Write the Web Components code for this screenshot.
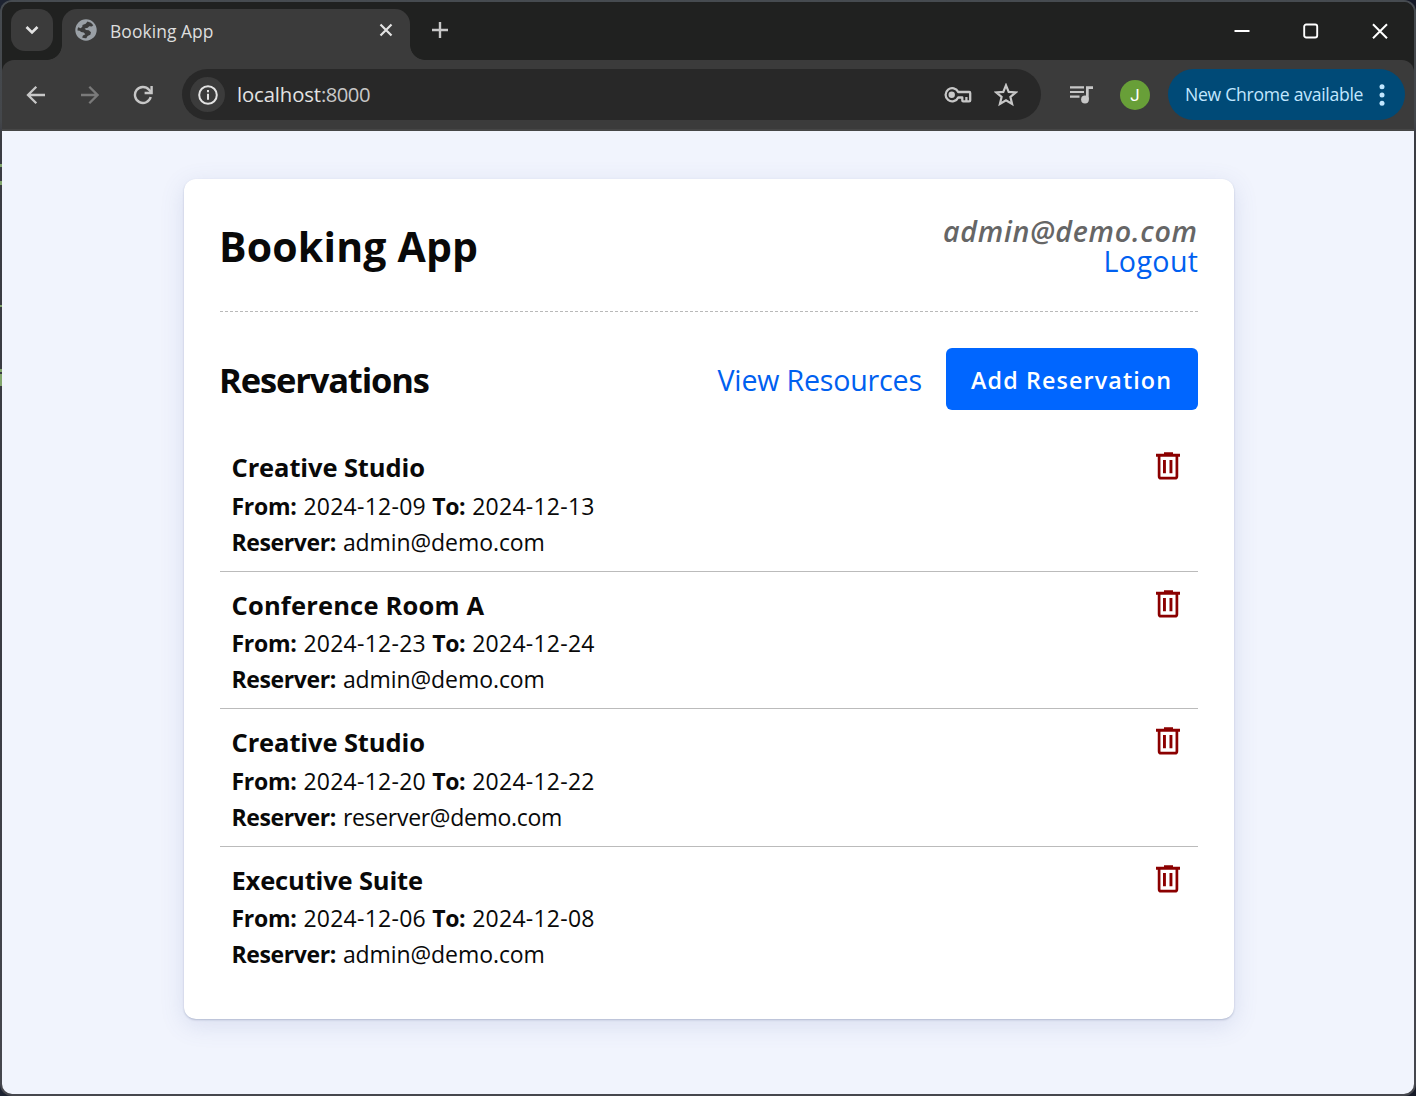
<!DOCTYPE html>
<html lang="en">
<head>
<meta charset="utf-8">
<title>Booking App</title>
<style>
html,body{margin:0;height:100%;overflow:hidden;background:linear-gradient(90deg,#1d2331,#151927)}
body{font-family:"Open Sans","Noto Sans",sans-serif;color:#090909}
</style>
</head>
<body>
<app-window>
  <tab-strip slot="tabs" label="Booking App"></tab-strip>
  <nav-bar slot="nav"></nav-bar>
  <booking-card>
    <account-header slot="header" email="admin@demo.com"></account-header>
    <section-bar slot="bar"></section-bar>
    <reservation-row name="Creative Studio" name-width="193.5" from="2024-12-09" to="2024-12-13" who="admin@demo.com" who-width="202"></reservation-row>
    <reservation-row name="Conference Room A" name-width="252.5" from="2024-12-23" to="2024-12-24" who="admin@demo.com" who-width="202"></reservation-row>
    <reservation-row name="Creative Studio" name-width="193.5" from="2024-12-20" to="2024-12-22" who="reserver@demo.com" who-width="219.5"></reservation-row>
    <reservation-row name="Executive Suite" name-width="191.5" from="2024-12-06" to="2024-12-08" who="admin@demo.com" who-width="202"></reservation-row>
  </booking-card>
</app-window>
<script>
const define = (name, render, after) => customElements.define(name, class extends HTMLElement {
  connectedCallback() {
    if (this.shadowRoot) return;
    this.attachShadow({mode: 'open'}).innerHTML = render(this);
    if (after) after(this);
  }
});
const at = (el, n) => el.getAttribute(n) || '';

/* Tracks a single line of text so that it occupies the given advance width. */
define('fit-text', () => `<style>:host{display:inline-block;white-space:nowrap}span{display:inline-block}</style><span><slot></slot></span>`, el => {
  const s = el.shadowRoot.querySelector('span');
  const want = parseFloat(at(el, 'w'));
  const n = el.textContent.length;
  const gap = (want - s.getBoundingClientRect().width) / (n - 1);
  s.style.letterSpacing = gap + 'px';
  s.style.marginRight = -gap + 'px';
});

define('app-window', () => `<style>
:host{display:flex;flex-direction:column;box-sizing:border-box;height:1096px;width:1416px;padding:2px;border-radius:12px;background:linear-gradient(#464b50,#44474b 120px,#3b3c43 135px,#3a3b43 60%,#46474e);overflow:hidden}
.in{display:flex;flex-direction:column;flex:1;border-radius:10px;overflow:hidden;background:#202120}
main{flex:1;background:#f1f4fd;padding:48px 180px 0 182px;overflow:hidden}
.speck{position:absolute;left:0;width:2px;background:#82a56c}
</style><div class="in"><slot name="tabs"></slot><slot name="nav"></slot><main><slot></slot></main></div>
<i class="speck" style="top:164px;height:3px"></i><i class="speck" style="top:181px;height:4px"></i><i class="speck" style="top:305px;height:2px"></i><i class="speck" style="top:369px;height:3px"></i><i class="speck" style="top:374px;height:12px"></i>`);

define('tab-strip', el => `<style>
:host{display:flex;height:58px;background:#202120;flex:none}
.search{width:42px;height:42px;margin:7px 0 0 9px;border-radius:14px;background:#3b3b3b;display:flex;align-items:center;justify-content:center}
.tab{position:relative;box-sizing:border-box;width:348px;height:51px;margin:7px 0 0 9px;border-radius:15px 15px 0 0;background:#3b3b3b;display:flex;align-items:center;padding:0 17px 9px 13px;font-size:17.4px;color:#dedede}
.tab:before,.tab:after{content:"";position:absolute;bottom:0;width:15px;height:15px}
.tab:before{left:-15px;background:radial-gradient(circle at 0 0,#0000 14.5px,#3b3b3b 15.2px)}
.tab:after{right:-15px;background:radial-gradient(circle at 100% 0,#0000 14.5px,#3b3b3b 15.2px)}
fit-text{margin:1px auto 0 13px;line-height:24px}
.plus{margin:20px auto 0 22px}
.win{display:flex;gap:53px;padding:21px 26px 0 0}
svg{display:block;flex:none}
</style>
<div class="search"><svg width="14" height="10" fill="none" stroke="#e3e3e3" stroke-width="2.700"><path d="m1.500 2 5.500 5.400L12.500 2"/></svg></div>
<div class="tab">
<svg width="22" height="22" viewBox="0 0 22 22"><circle cx="11" cy="11" r="10.700" fill="#9aa0a6"/><path fill="#3b3b3b" d="M12.500 2.600Q16.500 3.100 18.300 6.200L16.800 7.600 14.200 7.200 12.800 8.700 9.600 9.500 11 11 13.800 11.200 16 13.300 15.300 15.800 12.600 17 11.300 19.200Q9.100 19.400 7.100 18.400L8 16.500 10.300 15.200 8.800 13.600 6.100 13 4.700 11.700 2.500 11.400Q2.500 9.600 3.100 8.300L5.700 9.300 7.300 7.700 7.500 6 10.700 4.700Z"/></svg>
<fit-text w="103.500">${at(el,'label')}</fit-text>
<svg width="14" height="14" fill="none" stroke="#e3e3e3" stroke-width="2.200"><path d="m1.500 1.500 11 11m0-11-11 11"/></svg>
</div>
<div class="plus"><svg width="16" height="16" fill="none" stroke="#c7c7c7" stroke-width="2.400"><path d="M8 0v16M0 8h16"/></svg></div>
<div class="win">
<svg width="16" height="16"><path fill="#fff" d="M.5 7h15v2H.5z"/></svg>
<svg width="16" height="16"><rect x="1.200" y="1.500" width="13" height="13" rx="2" fill="none" stroke="#fff" stroke-width="1.900"/></svg>
<svg width="16" height="16" fill="none" stroke="#fff" stroke-width="2"><path d="m1 1.300 14 14m0-14L1 15.300"/></svg>
</div>`);

define('nav-bar', () => `<style>
:host{display:flex;box-sizing:border-box;height:71px;background:#3b3b3b;border-bottom:2px solid #464646;border-radius:12px 12px 0 0;flex:none;align-items:center;padding:0 9px 0 23px}
svg{display:block;flex:none}
.omni{box-sizing:border-box;width:859px;flex:none;height:51px;margin-left:29px;border-radius:26px;background:#282828;display:flex;align-items:center;padding:0 23px 0 8px;font-size:20.300px;line-height:28px;color:#e3e3e3}
.info{width:35px;height:35px;border-radius:50%;background:#3b3b3b;display:flex;align-items:center;justify-content:center;margin-right:12px}
.omni fit-text{margin-top:-2px}
.port{color:#c7c7c7}
.key{margin-left:auto}.star{margin-left:22px}
.ava{width:30px;height:30px;border-radius:50%;background:#689f38;color:#fff;font:17px/31px Roboto,sans-serif;text-align:center;margin-left:27px;flex:none}
.pill{box-sizing:border-box;width:237px;flex:none;height:51px;border-radius:26px;background:#004a77;color:#c2e7ff;margin-left:18px;display:flex;align-items:center;padding:0 19px 0 17px;font-size:17.600px;line-height:24px;justify-content:space-between}
.pill fit-text{margin-top:-2px}
</style>
<svg width="20" height="20" fill="none" stroke="#c7c7c7" stroke-width="2.300"><path d="M20 10H3M11.300 1.800 3 10l8.300 8.200"/></svg>
<svg style="margin-left:34px" width="20" height="20" fill="none" stroke="#7a7a7a" stroke-width="2.300"><path d="M2 10h16M10.300 1.800l8.200 8.200-8.200 8.200"/></svg>
<svg style="margin-left:34px" width="20" height="20" fill="none" stroke="#c7c7c7" stroke-width="2.400"><path d="M17.700 12A8 8 0 1 1 16 4.700l2 2.200"/><path d="M18.600 1v7h-7"/></svg>
<div class="omni"><div class="info"><svg width="20" height="20"><circle cx="10" cy="10" r="8.800" fill="none" stroke="#e3e3e3" stroke-width="2"/><path fill="#e3e3e3" d="M9 8.800h2v6H9zM9 5h2v2.200H9z"/></svg></div><fit-text w="84">localhost</fit-text><fit-text class="port" w="49.500">:8000</fit-text>
<svg class="key" width="28" height="18" fill="none" stroke="#c7c7c7" stroke-width="2.300"><path stroke-linejoin="round" d="M14.200 6A6.600 6.600 0 1 0 14.200 11.500H18.300V14.500q0 .9.900.9h6q1 0 1-1V7q0-1-1-1Z"/><path d="M22.400 11v4"/><circle cx="7.700" cy="8.700" r="3.200" fill="#c7c7c7" stroke="none"/></svg>
<svg class="star" width="24" height="24" viewBox="0 0 24 24" fill="none" stroke="#c7c7c7" stroke-width="2.200"><path d="m12 2.300 2.700 6.600 7.100.5-5.400 4.600 1.700 7-6.100-3.700L5.900 21l1.700-7-5.400-4.600 7.100-.5Z"/></svg></div>
<svg style="margin-left:28px" width="24" height="20" fill="#c7c7c7"><path d="M1 1.300h14v2.200H1zM1 5.900h14v2.200H1zM1 10.500h9.500v2.200H1zM17 1.300h7v2.700h-4.300V14H17z"/><circle cx="16" cy="14.500" r="3.900"/></svg>
<div class="ava">J</div>
<div class="pill"><fit-text w="178.500">New Chrome available</fit-text><svg width="8" height="22" fill="#c2e7ff"><circle cx="4" cy="2.800" r="2.500"/><circle cx="4" cy="11" r="2.500"/><circle cx="4" cy="19.200" r="2.500"/></svg></div>`);

define('booking-card', () => `<style>
:host{display:block;box-sizing:border-box;width:1050px;height:840px;padding:36px;border-radius:12px;background:#fff;box-shadow:0 1px 2px rgba(70,85,130,.3),0 6px 24px rgba(90,105,165,.16)}
</style><slot name="header"></slot><slot name="bar"></slot><slot></slot>`);

define('account-header', el => `<style>
:host{display:flex;box-sizing:border-box;height:97px;justify-content:space-between;background:repeating-linear-gradient(90deg,#b9b9b9 0 3px,#fff 3px 5px) bottom/100% 1px no-repeat}
h1{margin:1px 0 0 -1px;font-size:41px;font-weight:700;line-height:60px}
.acct{display:flex;flex-direction:column;align-items:flex-end;padding-top:1px;font-size:28.600px;line-height:30px}
.mail{font-style:italic;font-weight:600;color:#666;margin-right:1px}
.out{color:#0060f0}
</style><h1><fit-text w="259">Booking App</fit-text></h1><div class="acct"><fit-text class="mail" w="254">${at(el,'email')}</fit-text><fit-text class="out" w="94.500">Logout</fit-text></div>`);

define('section-bar', () => `<style>
:host{display:flex;align-items:center;height:62px;margin:36px 0 24px}
h2{margin:1px auto 0 -1px;font-size:34.500px;line-height:50px;font-weight:700}
.view{color:#0060f0;font-size:28.600px;line-height:40px;margin:2px 24px 0 0}
button{box-sizing:border-box;width:252px;height:62px;padding:1px 2px 0 0;border:0;border-radius:6px;background:#06f;color:#fff;font:600 23.300px/34px "Open Sans",sans-serif}
</style><h2><fit-text w="211">Reservations</fit-text></h2><fit-text class="view" w="204.500">View Resources</fit-text><button><fit-text w="200">Add Reservation</fit-text></button>`);

define('reservation-row', el => `<style>
:host{display:flex;box-sizing:border-box;height:137.500px;padding:12px 17px 0 11.500px;border-bottom:1px solid #bbb;justify-content:space-between}
:host(:last-of-type){border-bottom:0}
.t{height:41.600px;line-height:43px;font-size:25.500px;font-weight:700}
.l{display:flex;gap:6.600px;height:36px;line-height:36px;font-size:23px}
b{font-weight:700}
svg{display:block;margin-top:5px}
</style><div><div class="t"><fit-text w="${at(el,'name-width')}">${at(el,'name')}</fit-text></div>
<div class="l"><b><fit-text w="65.300">From:</fit-text></b><fit-text w="122.300">${at(el,'from')}</fit-text><b><fit-text w="33.300">To:</fit-text></b><fit-text w="122.300">${at(el,'to')}</fit-text></div>
<div class="l"><b><fit-text w="104.800">Reserver:</fit-text></b><fit-text w="${at(el,'who-width')}">${at(el,'who')}</fit-text></div></div>
<svg width="26" height="30" viewBox="0 0 26 30"><path fill="#8b0000" d="M9 1.300h9v1.400h7v3H1v-3h8zM8 9h2.900v13.300H8zM14.500 9h2.900v13.300h-2.900z"/><path fill="none" stroke="#8b0000" stroke-width="2.700" d="M4.100 5v20.200q0 2 2 2h13.800q2 0 2-2V5"/></svg>`);
</script>
</body>
</html>
